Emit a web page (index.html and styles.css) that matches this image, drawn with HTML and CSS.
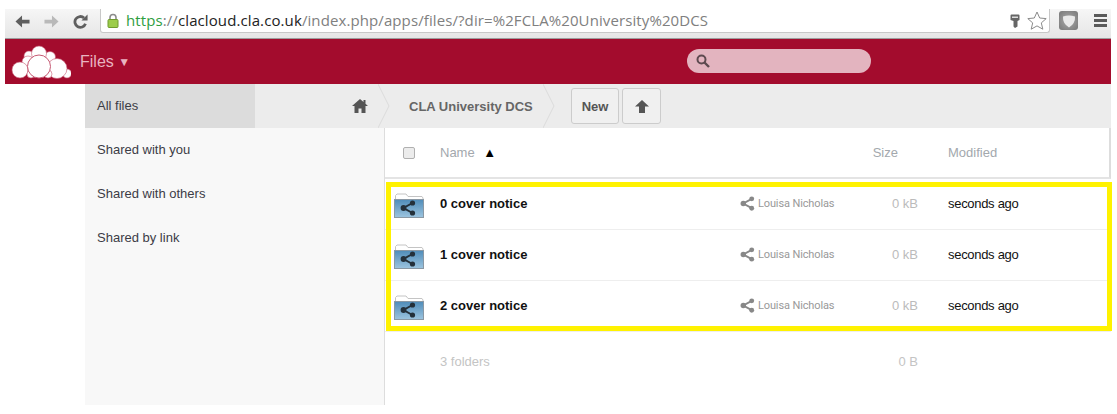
FILE: index.html
```html
<!DOCTYPE html>
<html lang="en">
<head>
<meta charset="utf-8">
<title>Files</title>
<link rel="stylesheet" href="styles.css">
</head>
<body>
<div class="window">
  <div class="chrome">
    <div class="nav-buttons">
      <svg class="nav-icon" viewBox="0 0 16 16"><path d="M15.500 6H7.500V1.500L0.500 8l7 6.500V10h8z" fill="#5f5f5f"/></svg>
      <svg class="nav-icon" viewBox="0 0 16 16"><path d="M.5 6h8V1.500l7 6.500-7 6.500V10h-8z" fill="#b9b9b9"/></svg>
      <svg class="nav-icon" viewBox="0 0 16 16"><path d="M13.300 10.500A5.800 5.800 0 1 1 11.800 4.200" fill="none" stroke="#5f5f5f" stroke-width="3"/><path d="M9 7h6.500V0.500z" fill="#5f5f5f"/></svg>
    </div>
    <div class="omnibox">
      <svg class="lock" viewBox="0 0 12 15"><path d="M3 7V4.500a3 3 0 0 1 6 0V7" fill="none" stroke="#8c8c8c" stroke-width="1.600"/><rect x="1" y="6.500" width="10" height="8" rx="1" fill="#9ccc4a" stroke="#6f9a2e"/></svg>
      <div class="url"><span class="scheme">https</span><span class="path">://</span><span class="host">clacloud.cla.co.uk</span><span class="path">/index.php/apps/files/?dir=%2FCLA%20University%20DCS</span></div>
      <svg class="key" viewBox="0 0 10 14"><path d="M.5 1.500a1 1 0 0 1 1-1h7a1 1 0 0 1 1 1V6l-2 1v5.500L5 14l-1.500-1.500V7l-3-1z" fill="#666"/><rect x="2" y="2.500" width="6" height="1.500" fill="#ddd"/></svg>
      <svg class="star" viewBox="0 0 20 19"><path d="M10 1l2.700 6 6.500.6-4.900 4.300 1.500 6.300L10 14.900l-5.800 3.300 1.500-6.300L.8 7.600l6.500-.6z" fill="#fff" stroke="#8a8a8a"/></svg>
    </div>
    <div class="ext-badge"><svg class="ext-shield" viewBox="0 0 14 14"><path d="M1 2.500Q7 .5 13 2.500 13.500 9.500 7 13.500.5 9.500 1 2.500z" fill="#e9e9e9"/></svg></div>
    <div class="burger"><span></span><span></span><span></span></div>
  </div>
  <header class="topbar">
    <svg class="logo" viewBox="0 0 60 34">
      <g fill="#fff" stroke="#c65a74" stroke-width=".6">
        <circle cx="18" cy="11" r="5"/><circle cx="39" cy="12" r="5.500"/><circle cx="28" cy="8.500" r="7.500"/>
        <circle cx="17" cy="17" r="6"/><circle cx="56" cy="28.500" r="4.500"/><circle cx="46" cy="23.500" r="10"/><circle cx="9" cy="25" r="8"/>
        <circle cx="20" cy="29" r="4"/><circle cx="37" cy="29" r="4"/>
      </g>
      <circle cx="28" cy="21.500" r="11.500" fill="#fff" stroke="#c65a74" stroke-width="1"/>
    </svg>
    <div class="app-title">Files <span class="caret">▼</span></div>
    <div class="search">
      <svg class="search-icon" viewBox="0 0 14 14"><circle cx="5.500" cy="5.500" r="4" fill="none" stroke="#5e4a50" stroke-width="2"/><path d="M8.500 8.500l4.500 4.500" stroke="#5e4a50" stroke-width="2.400"/></svg>
    </div>
  </header>
  <div class="app">
    <div class="controls">
      <div class="nav-current">All files</div>
      <div class="crumb crumb-home">
        <svg class="home" viewBox="0 0 16 14"><path d="M8 0L0 7h2.500v7h4V9.500h3V14h4V7H16l-2.500-2.200V1h-2v2z" fill="#555"/></svg>
        <svg class="chevron" viewBox="0 0 12 44"><path d="M0 0l11 22L0 44" fill="none" stroke="#dbdbdb"/></svg>
      </div>
      <div class="crumb crumb-dir">
        <span>CLA University DCS</span>
        <svg class="chevron" viewBox="0 0 12 44"><path d="M0 0l11 22L0 44" fill="none" stroke="#dbdbdb"/></svg>
      </div>
      <div class="btn btn-new">New</div>
      <div class="btn btn-up"><svg class="up" viewBox="0 0 14 13"><path d="M7 0l7 6.500H10V13H4V6.500H0z" fill="#555"/></svg></div>
    </div>
    <div class="body">
      <nav class="sidebar">
        <a class="side-link">Shared with you</a>
        <a class="side-link">Shared with others</a>
        <a class="side-link">Shared by link</a>
      </nav>
      <main class="files">
        <div class="row head">
          <div class="check"><span class="box"></span></div>
          <div class="col-name">Name <span class="sort">▲</span></div>
          <div></div>
          <div class="col-size head-size">Size</div>
          <div class="col-mod">Modified</div>
        </div>
        <div class="row item">
          <div class="check"><svg class="folder" viewBox="0 0 30 25"><use href="#folder-art"/></svg></div>
          <div class="col-name">0 cover notice</div>
          <div class="owner"><svg class="share" viewBox="0 0 16 16"><use href="#share-art"/></svg>Louisa Nicholas</div>
          <div class="col-size">0 kB</div>
          <div class="col-mod">seconds ago</div>
        </div>
        <div class="row item">
          <div class="check"><svg class="folder" viewBox="0 0 30 25"><use href="#folder-art"/></svg></div>
          <div class="col-name">1 cover notice</div>
          <div class="owner"><svg class="share" viewBox="0 0 16 16"><use href="#share-art"/></svg>Louisa Nicholas</div>
          <div class="col-size">0 kB</div>
          <div class="col-mod">seconds ago</div>
        </div>
        <div class="row item">
          <div class="check"><svg class="folder" viewBox="0 0 30 25"><use href="#folder-art"/></svg></div>
          <div class="col-name">2 cover notice</div>
          <div class="owner"><svg class="share" viewBox="0 0 16 16"><use href="#share-art"/></svg>Louisa Nicholas</div>
          <div class="col-size">0 kB</div>
          <div class="col-mod">seconds ago</div>
        </div>
        <div class="row summary">
          <div></div>
          <div class="col-name">3 folders</div>
          <div></div>
          <div class="col-size">0 B</div>
          <div></div>
        </div>
      </main>
    </div>
  </div>
  <div class="highlight"></div>
</div>
<svg class="defs" width="0" height="0">
  <defs>
    <linearGradient id="folder-fill" x1="0" y1="0" x2="0" y2="1">
      <stop offset="0" stop-color="#4f8cb9"/><stop offset="1" stop-color="#9cc4df"/>
    </linearGradient>
    <symbol id="folder-art" viewBox="0 0 30 25">
      <path d="M1.500 7V2.500L3 1h9l2 2.500h14L29 5v2z" fill="#fff" stroke="#c4c4c4"/>
      <rect x="0.500" y="6.500" width="29" height="18" fill="url(#folder-fill)" stroke="#8a98a4"/>
      <g transform="translate(6,7)"><use href="#share-dark"/></g>
    </symbol>
    <symbol id="share-dark" width="16" height="16" viewBox="0 0 16 16">
      <path d="M12.500 3L3.500 8l9 5" fill="none" stroke="#24303a" stroke-width="2"/>
      <circle cx="12.500" cy="3" r="2.600" fill="#24303a"/><circle cx="3.500" cy="8" r="2.900" fill="#24303a"/><circle cx="12.500" cy="13" r="2.600" fill="#24303a"/>
    </symbol>
    <symbol id="share-art" viewBox="0 0 16 16">
      <path d="M12.500 3L3.500 8l9 5" fill="none" stroke="#888" stroke-width="2"/>
      <circle cx="12.500" cy="3" r="2.600" fill="#888"/><circle cx="3.500" cy="8" r="2.900" fill="#888"/><circle cx="12.500" cy="13" r="2.600" fill="#888"/>
    </symbol>
  </defs>
</svg>
</body>
</html>
```

FILE: styles.css
```css
* { box-sizing: border-box; }
html, body { margin: 0; padding: 0; background: #fff; }
body { width: 1117px; height: 414px; overflow: hidden; font-family: "Liberation Sans", Arial, sans-serif; font-size: 13px; color: #333; }
.window { position: relative; width: 1106px; margin-left: 5px; padding-top: 9px; }
.defs { position: absolute; }

.chrome { height: 30px; display: flex; align-items: flex-start; background: linear-gradient(#f6f6f6, #e6e6e6); border-bottom: 1px solid #9d9d9d; }
.nav-buttons { width: 95px; height: 24px; padding-left: 10px; display: flex; align-items: center; gap: 14px; flex: none; }
.nav-icon { width: 15px; height: 15px; display: block; }
.omnibox { width: 950px; height: 24px; background: #fff; border: 1px solid #c8c8c8; border-top: 0; border-radius: 0 0 3px 3px; display: flex; align-items: center; padding-left: 6px; flex: none; }
.lock { width: 12px; height: 15px; flex: none; margin-right: 7px; }
.url { font-family: "Open Sans", sans-serif; font-size: 15px; letter-spacing: .1px; flex: 1; white-space: nowrap; line-height: 22px; padding-bottom: 2px; }
.scheme { color: #2f9e3f; }
.host { color: #222; }
.path { color: #808080; }
.key { width: 10px; height: 14px; margin-right: 7px; flex: none; }
.star { width: 20px; height: 19px; margin-right: 2px; flex: none; }
.ext-badge { width: 19px; height: 19px; margin: 2px 0 0 9px; background: radial-gradient(#aaa, #777); border-radius: 3px; display: flex; align-items: center; justify-content: center; flex: none; }
.ext-shield { width: 14px; height: 14px; }
.burger { width: 13px; margin: 5px 0 0 16px; display: flex; flex-direction: column; gap: 2px; flex: none; }
.burger span { display: block; height: 3px; background: #5a5a5a; }

.topbar { height: 45px; background: #a30c2d; display: flex; align-items: center; position: relative; }
.logo { width: 60px; height: 34px; margin-left: 6px; flex: none; }
.app-title { margin-left: 9px; font-size: 16px; color: #e9b4c0; }
.caret { font-size: 12px; vertical-align: 1px; }
.search { position: absolute; left: 682px; top: 10px; width: 184px; height: 24px; border-radius: 12px; background: #e3b4bf; padding: 5px 0 0 9px; }
.search-icon { width: 14px; height: 14px; display: block; }

.app { margin-left: 80px; }
.controls { height: 44px; background: #ececec; display: flex; align-items: center; }
.nav-current { width: 170px; height: 44px; background: #dcdcdc; padding-left: 12px; line-height: 43px; color: #3c3c46; flex: none; }
.crumb { height: 44px; display: flex; align-items: center; flex: none; }
.crumb-home { width: 135px; justify-content: flex-end; }
.home { width: 16px; height: 14px; margin-right: 10px; }
.chevron { width: 12px; height: 44px; display: block; flex: none; }
.crumb-dir { width: 165px; padding-left: 19px; justify-content: space-between; font-weight: bold; color: #666; }
.btn { height: 36px; border: 1px solid #ccc; border-radius: 3px; background: #f0f0f0; font-weight: bold; color: #555; display: flex; align-items: center; justify-content: center; flex: none; }
.btn-new { width: 48px; margin-left: 16px; }
.btn-up { width: 39px; margin-left: 3px; }
.up { width: 14px; height: 13px; display: block; }

.body { display: flex; height: 277px; }
.sidebar { width: 299px; flex: none; background: #f8f8f8; display: flex; flex-direction: column; }
.side-link { height: 44px; line-height: 43px; padding-left: 12px; color: #3c3c46; }
.files { flex: 1; border-left: 1px solid #ddd; }

.row { display: grid; grid-template-columns: 55px 300px 100px 78px 1fr; align-items: center; height: 51px; border-bottom: 1px solid #eee; }
.head { border-right: 2px solid #ddd; border-bottom: 2px solid #e4e4e4; color: #a3a8ad; }
.item, .summary { padding-bottom: 2px; }
.check { display: flex; justify-content: center; padding-right: 8px; }
.box { width: 12px; height: 12px; border: 1px solid #b0b0b0; border-radius: 2px; background: #ececec; display: block; }
.sort { color: #000; font-size: 13px; margin-left: 5px; }
.head-size { padding-right: 20px; }
.col-size { text-align: right; }
.col-mod { padding-left: 30px; }
.item .col-name { font-weight: bold; color: #111; }
.item .col-size { color: #bbb; }
.item .col-mod { color: #111; letter-spacing: -.3px; }
.folder { width: 30px; height: 25px; display: block; margin-top: 4px; }
.owner { display: flex; align-items: center; font-family: Roboto, sans-serif; font-size: 11px; letter-spacing: -.13px; color: #999; }
.share { width: 15px; height: 15px; margin-right: 3px; }
.summary { border-bottom: 0; height: 61px; color: #c4c4c4; }
.highlight { position: absolute; left: 381px; top: 182px; width: 726px; height: 149px; border: 5px solid #fff200; pointer-events: none; }
```
